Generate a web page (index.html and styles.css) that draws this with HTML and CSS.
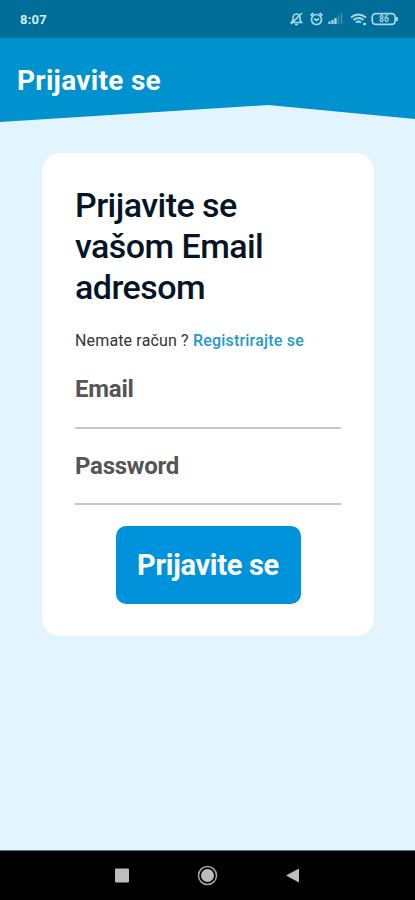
FILE: index.html
```html
<!DOCTYPE html>
<html lang="hr">
	<head>
		<meta charset="utf-8">
		<meta name="viewport" content="width=device-width, initial-scale=1">
		<title>Prijavite se</title>
		<link rel="stylesheet" href="styles.css">
	</head>
	<body>
		<div class="app">
			<!-- status bar -->
			<div class="status">
				<span class="time">8:07</span>
				<svg class="status-icons" width="112" height="18" viewBox="0 0 112 18" fill="none">
					<!-- muted bell -->
					<path d="M2.500 12.500h10l-1.500-2.500V7.500a3.500 3.500 0 0 0-7 0V10zM6 14.500h3M2 14L13 3" stroke-width="1.600"/>
					<!-- alarm -->
					<circle cx="27.500" cy="9.500" r="5" stroke-width="1.700"/>
					<path d="M21.500 5.500l3-2.500M33.500 5.500l-3-2.500M25 8.500l2.500 2 2.500-2" stroke-width="1.700"/>
					<!-- signal -->
					<path d="M40.500 14v-2.500M43.500 14v-4M46.500 14V8" stroke-width="2.300"/>
					<path class="dim" d="M49.500 14V5.500M52.500 14V3" stroke-width="1.500"/>
					<!-- wifi -->
					<path d="M62 7.500q7-6 15 0M64.500 10q5-4 10 0M67 12.500q2.500-2 5 0" stroke-width="2"/>
					<path d="M74 14h3" stroke-width="2.200"/>
					<!-- battery -->
					<rect x="83.200" y="3.700" width="23" height="10.600" rx="3.500" stroke-width="1.700"/>
					<path d="M108 7v4" stroke-width="1.800"/>
					<text x="90" y="12">86</text>
				</svg>
			</div>

			<div class="header">
				<h1>Prijavite se</h1>
			</div>

			<div class="content">
				<form class="card">
					<h2>Prijavite se<br>vašom Email<br>adresom</h2>
					<p class="register">Nemate račun ? <a>Registrirajte se</a></p>
					<label class="field">Email</label>
					<label class="field">Password</label>
					<button type="button" class="btn">Prijavite se</button>
				</form>
			</div>

			<!-- navigation buttons -->
			<div class="nav">
				<svg width="415" height="49" viewBox="0 0 415 49">
					<rect x="115" y="17.500" width="14" height="14" rx="1"/>
					<circle cx="207.500" cy="24.500" r="6.500"/>
					<circle class="ring" cx="207.500" cy="24.500" r="9"/>
					<path d="M286 24.500l13-7v14z"/>
				</svg>
			</div>
		</div>
	</body>
</html>
```

FILE: styles.css
```css
* {
    margin: 0;
    padding: 0;
    box-sizing: border-box;
}

body {
    font-family: Roboto, "Liberation Sans", sans-serif;
    background: #e2f5fe;
}

.app {
    display: flex;
    flex-direction: column;
    height: 900px;
}

.status {
    display: flex;
    justify-content: space-between;
    align-items: center;
    height: 38px;
    padding: 0 14px 0 20px;
    background: #006e98;
}

.time {
    padding-top: 1px;
    font-size: 13px;
    font-weight: 700;
    line-height: 18px;
    letter-spacing: 0.2px;
    color: #d5edf5;
}

.status-icons {
    stroke: #a9d8e8;
}

.status-icons .dim {
    stroke: #3f93b3;
}

.status-icons text {
    font-size: 8.500px;
    font-weight: 700;
    fill: #a9d8e8;
    stroke: none;
}

.header {
    height: 84px;
    padding: 27px 17px 0;
    background: #0092ce;
    clip-path: polygon(0 0, 100% 0, 100% 81px, 268px 67px, 0 84px);
}

.header h1 {
    font-size: 28px;
    font-weight: 700;
    line-height: 32px;
    letter-spacing: 0.3px;
    color: #fff;
}

.content {
    flex: 1;
    padding: 31px 41px 0 42px;
}

.card {
    display: flex;
    flex-direction: column;
    height: 483px;
    padding: 32px 33px 0;
    background: #fff;
    border-radius: 18px;
}

.card h2 {
    font-size: 34px;
    font-weight: 500;
    line-height: 41px;
    letter-spacing: -0.55px;
    color: #061426;
}

.register {
    margin-top: 22px;
    font-size: 16px;
    line-height: 22px;
    letter-spacing: 0.15px;
    white-space: nowrap;
    color: #333;
}

.register a {
    font-weight: 500;
    letter-spacing: 0.2px;
    color: #2499cc;
}

.field {
    height: 76px;
    padding-top: 23px;
    border-bottom: 2px solid #c6c6c6;
    font-size: 24px;
    font-weight: 700;
    line-height: 28px;
    letter-spacing: -0.25px;
    color: #555;
}

.register + .field {
    height: 77px;
}

.btn {
    align-self: center;
    width: 185px;
    height: 78px;
    margin: 21px 0 0;
    border: 0;
    border-radius: 10px;
    background: #0093dc;
    font: 700 29px/78px Roboto, "Liberation Sans", sans-serif;
    letter-spacing: -0.3px;
    color: #fff;
}

.nav {
    height: 50px;
    border-top: 1px solid #60757c;
    background: #000;
}

.nav svg {
    display: block;
    fill: #bdbdbd;
}

.nav .ring {
    fill: none;
    stroke: #a5a5a5;
    stroke-width: 1.500;
}
```
